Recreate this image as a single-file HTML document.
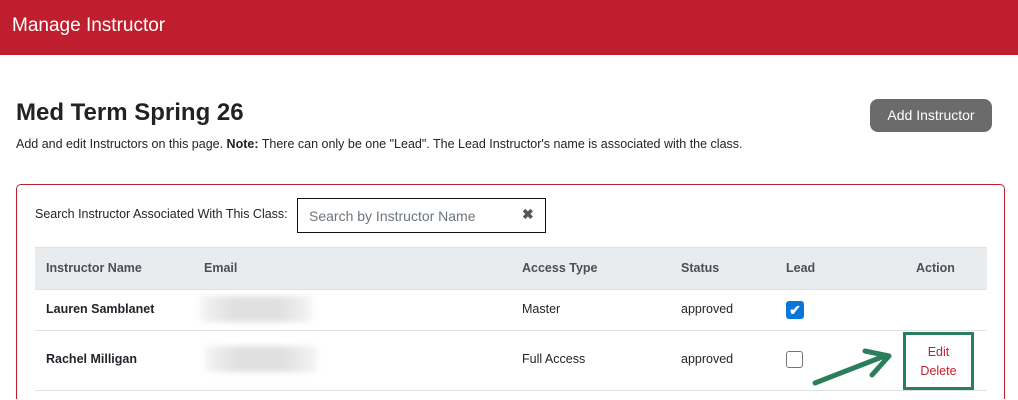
<!DOCTYPE html>
<html style="height:400px;overflow:hidden"><head><style>
body{margin:0;width:1018px;height:400px;overflow:hidden;background:#fff;font-family:"Liberation Sans",Arial,sans-serif;color:#212529;position:relative}
.hdr{position:absolute;left:0;top:0;width:1018px;height:55px;background:#be1e2d;color:#fff;font-size:19px}
.hdr span{position:absolute;left:12px;top:15px}
.a{position:absolute;white-space:nowrap}
.th{font-weight:bold;color:#495057;font-size:12.5px}
.td{font-size:12.5px}
.b{font-weight:bold}
</style></head><body>
<div class="hdr"><span>Manage Instructor</span></div>
<div class="a" style="left:16px;top:99px;font-size:24px;font-weight:bold;color:#222">Med Term Spring 26</div>
<div class="a" style="left:16px;top:137px;font-size:12.5px">Add and edit Instructors on this page. <b>Note:</b> There can only be one "Lead". The Lead Instructor's name is associated with the class.</div>
<div class="a" style="left:870px;top:99px;width:122px;height:33px;background:#6b6b6b;border-radius:8px;color:#fff;font-size:14px;text-align:center;line-height:33px">Add Instructor</div>
<div class="a" style="left:16px;top:184px;width:987px;height:214px;border:1px solid #be1e2d;border-bottom:none;border-radius:5px 5px 0 0"></div>
<div class="a" style="left:35px;top:207px;font-size:12.5px">Search Instructor Associated With This Class:</div>
<div class="a" style="left:297px;top:198px;width:247px;height:33px;border:1px solid #111"></div>
<div class="a" style="left:309px;top:208px;font-size:14px;color:#6c757d">Search by Instructor Name</div>
<div class="a" style="left:522px;top:206px;font-size:14px;color:#555;font-weight:bold">✖</div>
<div class="a" style="left:35px;top:247px;width:952px;height:42px;background:#e9ecef;border-top:1px solid #dee2e6"></div>
<div class="a" style="left:35px;top:289px;width:952px;height:1px;background:#dee2e6"></div>
<div class="a" style="left:35px;top:330px;width:952px;height:1px;background:#dee2e6"></div>
<div class="a" style="left:35px;top:390px;width:952px;height:1px;background:#dee2e6"></div>
<div class="a th" style="left:46px;top:261px">Instructor Name</div>
<div class="a th" style="left:204px;top:261px">Email</div>
<div class="a th" style="left:522px;top:261px">Access Type</div>
<div class="a th" style="left:681px;top:261px">Status</div>
<div class="a th" style="left:786px;top:261px">Lead</div>
<div class="a th" style="left:916px;top:261px">Action</div>
<div class="a td b" style="left:46px;top:302px">Lauren Samblanet</div>
<div class="a" style="left:200px;top:296px;width:112px;height:26px;background:linear-gradient(90deg,#f4f4f4,#e0e0e0 30%,#e0e0e0 70%,#f4f4f4);filter:blur(3px)"></div>
<div class="a td" style="left:522px;top:302px">Master</div>
<div class="a td" style="left:681px;top:302px">approved</div>
<div class="a" style="left:786px;top:301px;width:18px;height:18px;background:#0b76d9;border-radius:3px;color:#fff;font-size:14px;text-align:center;line-height:18px;font-weight:bold">✔</div>
<div class="a td b" style="left:46px;top:352px">Rachel Milligan</div>
<div class="a" style="left:205px;top:346px;width:112px;height:26px;background:linear-gradient(90deg,#f4f4f4,#e0e0e0 30%,#e0e0e0 70%,#f4f4f4);filter:blur(3px)"></div>
<div class="a td" style="left:522px;top:352px">Full Access</div>
<div class="a td" style="left:681px;top:352px">approved</div>
<div class="a" style="left:786px;top:351px;width:15px;height:15px;border:1.5px solid #777;border-radius:3px"></div>
<div class="a" style="left:903px;top:332px;width:65px;height:52px;border:3px solid #2a7f5a"></div>
<div class="a" style="left:903px;top:343px;width:71px;text-align:center;color:#c0202f;font-size:12.5px;line-height:19px">Edit<br>Delete</div>
<svg class="a" style="left:0;top:0" width="1018" height="400"><path d="M815 383 L882 357" stroke="#2a7f5a" stroke-width="5" stroke-linecap="round"/><path d="M865 351 L889 356 L872 375" stroke="#2a7f5a" stroke-width="5" fill="none" stroke-linecap="round" stroke-linejoin="round"/></svg>
</body></html>
